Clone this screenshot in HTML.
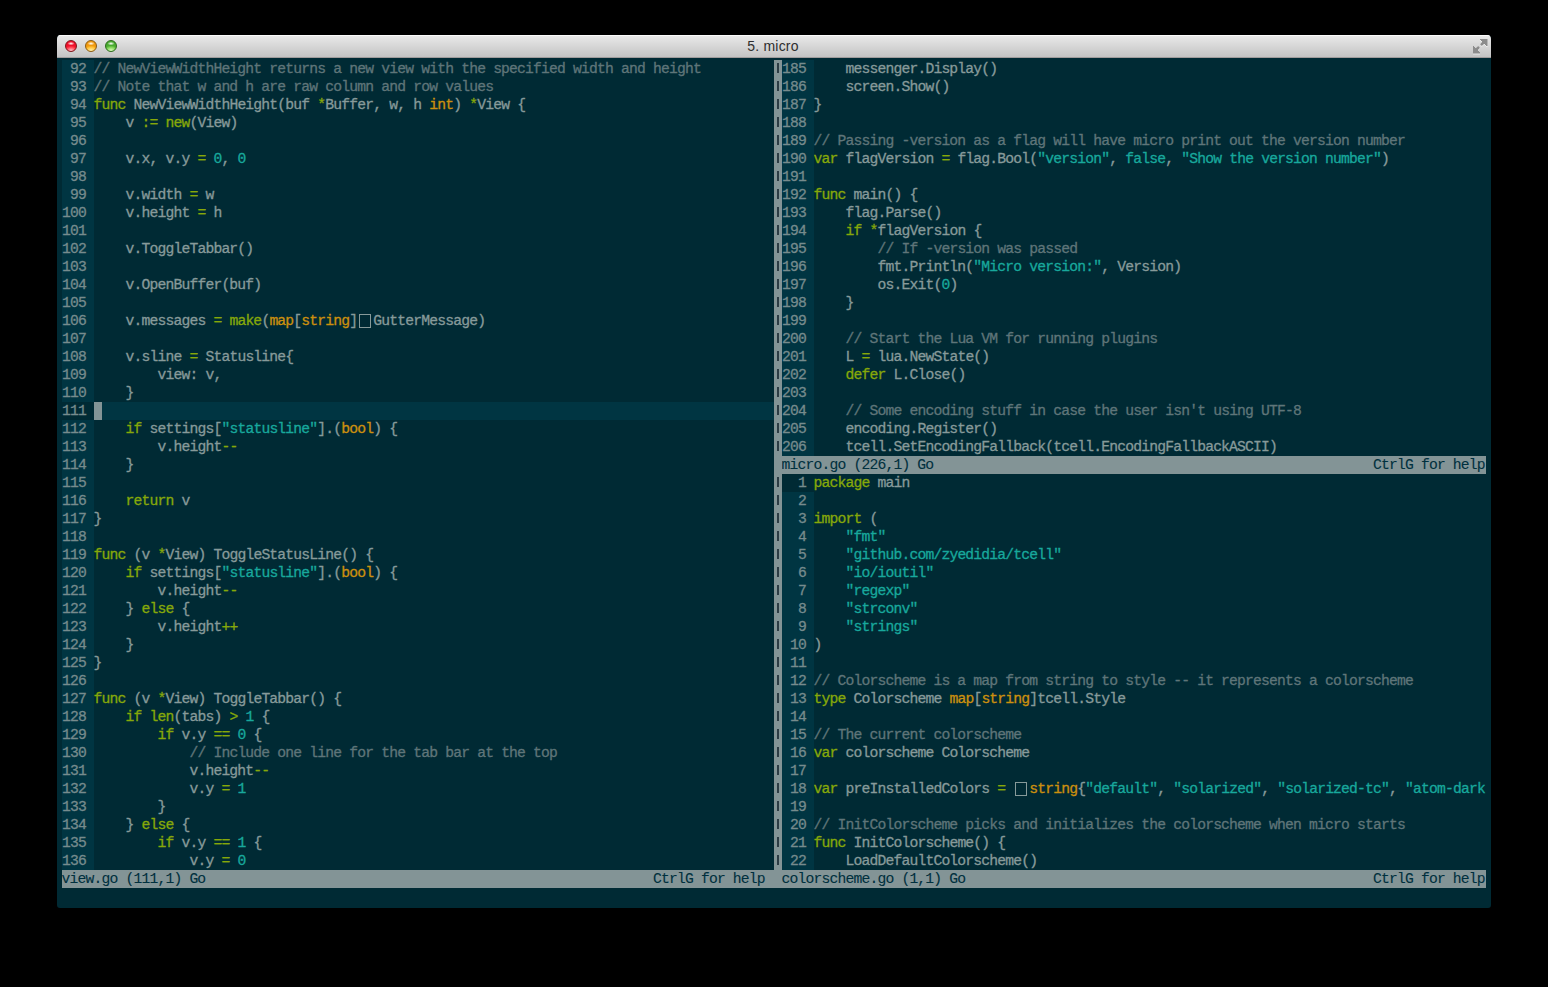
<!DOCTYPE html>
<html><head><meta charset="utf-8">
<style>
html,body{margin:0;padding:0;}
body{width:1548px;height:987px;background:#000;position:relative;overflow:hidden;}
.win{position:absolute;left:57px;top:35px;width:1434px;height:873px;border-radius:4px 4px 3px 3px;overflow:hidden;background:#002a34;}
.title{position:absolute;left:0;top:0;width:1434px;height:23px;background:linear-gradient(#eaeaea,#d8d8d8 45%,#c2c2c2);}
.title:before{content:"";position:absolute;left:0;top:0;right:0;height:1px;background:#fbfbfb;}
.title:after{content:"";position:absolute;left:0;bottom:0;right:0;height:1px;background:#a09c9c;}
.tt{position:absolute;left:-1px;width:1434px;top:3px;text-align:center;font:14px "Liberation Sans",sans-serif;letter-spacing:0.2px;color:#2e2e2e;}
.light{position:absolute;top:5px;width:12px;height:12px;border-radius:50%;box-sizing:border-box;}
.light:after{content:"";position:absolute;left:2px;top:1px;width:6px;height:3px;border-radius:50%;background:radial-gradient(ellipse at 50% 50%,rgba(255,255,255,0.95),rgba(255,255,255,0.35) 60%,rgba(255,255,255,0) 100%);}
.red{left:8px;background:radial-gradient(ellipse 70% 50% at 50% 95%,#ffc4cc,#ff3848 70%,#f0102a 100%);border:1px solid #7e1418;}
.yel{left:28px;background:radial-gradient(ellipse 70% 50% at 50% 95%,#fff4b0,#ffbe30 70%,#f09a10 100%);border:1px solid #8a5a10;}
.grn{left:48px;background:radial-gradient(ellipse 70% 50% at 50% 95%,#e0ffc0,#78d050 70%,#4aaa30 100%);border:1px solid #2a6a1a;}
.fs{position:absolute;left:1416px;top:4px;}
.r{position:absolute;height:18px;line-height:18px;white-space:pre;overflow:hidden;text-indent:-0.5px;font-family:"Liberation Mono",monospace;font-size:14.7px;letter-spacing:-0.8214px;color:#879a9a;-webkit-text-stroke:0.3px currentColor;}
.r i{font-style:normal;}
.bx{display:inline-block;position:relative;width:16px;height:18px;vertical-align:top;}
.bx:after{content:'';position:absolute;left:2px;top:2px;width:11.8px;height:14px;box-sizing:border-box;border:1.4px solid #879a9a;}
.c{color:#5f7579;} .s{color:#18a89c;} .k{color:#86a80a;} .y{color:#cc900e;}
.g{background:#003542;color:#768b8d;text-indent:0;}
.g.cur{background:#002a34;color:#768b8d;}
.hl{background:#003542;}
.st{background:#839496;color:#00303e;-webkit-text-stroke:0.1px currentColor;}
.cursor{position:absolute;width:8px;height:18px;background:#839496;}
.sep{position:absolute;width:8px;background:#839496;}
.bar{position:absolute;width:1.5px;height:10px;background:#2c3c44;}
</style></head><body>
<div class="win">
<div class="title">
<div class="light red"></div>
<div class="light yel"></div>
<div class="light grn"></div>
<svg class="fs" width="16" height="16" viewBox="0 0 16 16"><g fill="#f4f4f4" stroke="#f4f4f4" opacity="0.7" transform="translate(0,1)"><path d="M7 0H14V7Z"/><path d="M0 7V14H7Z"/><path d="M11 3L8.7 5.3M3 11L5.3 8.7" stroke-width="2.6" stroke-linecap="round"/></g><g fill="#8c8c8c" stroke="#8c8c8c"><path d="M7 0H14V7Z"/><path d="M0 7V14H7Z"/><path d="M11 3L8.7 5.3M3 11L5.3 8.7" stroke-width="2.6" stroke-linecap="round"/></g></svg>
<div class="tt">5. micro</div>
</div>
</div>
<div class="r g" style="left:62px;top:60px;width:32px"> 92 </div>
<div class="r " style="left:94px;top:60px;width:680px"><i class="c">// NewViewWidthHeight returns a new view with the specified width and height</i></div>
<div class="r g" style="left:62px;top:78px;width:32px"> 93 </div>
<div class="r " style="left:94px;top:78px;width:680px"><i class="c">// Note that w and h are raw column and row values</i></div>
<div class="r g" style="left:62px;top:96px;width:32px"> 94 </div>
<div class="r " style="left:94px;top:96px;width:680px"><i class="k">func</i> NewViewWidthHeight(buf <i class="k">*</i>Buffer, w, h <i class="y">int</i>) <i class="k">*</i>View {</div>
<div class="r g" style="left:62px;top:114px;width:32px"> 95 </div>
<div class="r " style="left:94px;top:114px;width:680px">    v <i class="k">:=</i> <i class="k">new</i>(View)</div>
<div class="r g" style="left:62px;top:132px;width:32px"> 96 </div>
<div class="r " style="left:94px;top:132px;width:680px"></div>
<div class="r g" style="left:62px;top:150px;width:32px"> 97 </div>
<div class="r " style="left:94px;top:150px;width:680px">    v.x, v.y <i class="k">=</i> <i class="s">0</i>, <i class="s">0</i></div>
<div class="r g" style="left:62px;top:168px;width:32px"> 98 </div>
<div class="r " style="left:94px;top:168px;width:680px"></div>
<div class="r g" style="left:62px;top:186px;width:32px"> 99 </div>
<div class="r " style="left:94px;top:186px;width:680px">    v.width <i class="k">=</i> w</div>
<div class="r g" style="left:62px;top:204px;width:32px">100 </div>
<div class="r " style="left:94px;top:204px;width:680px">    v.height <i class="k">=</i> h</div>
<div class="r g" style="left:62px;top:222px;width:32px">101 </div>
<div class="r " style="left:94px;top:222px;width:680px"></div>
<div class="r g" style="left:62px;top:240px;width:32px">102 </div>
<div class="r " style="left:94px;top:240px;width:680px">    v.ToggleTabbar()</div>
<div class="r g" style="left:62px;top:258px;width:32px">103 </div>
<div class="r " style="left:94px;top:258px;width:680px"></div>
<div class="r g" style="left:62px;top:276px;width:32px">104 </div>
<div class="r " style="left:94px;top:276px;width:680px">    v.OpenBuffer(buf)</div>
<div class="r g" style="left:62px;top:294px;width:32px">105 </div>
<div class="r " style="left:94px;top:294px;width:680px"></div>
<div class="r g" style="left:62px;top:312px;width:32px">106 </div>
<div class="r " style="left:94px;top:312px;width:680px">    v.messages <i class="k">=</i> <i class="k">make</i>(<i class="y">map</i>[<i class="y">string</i>]<b class="bx"></b>GutterMessage)</div>
<div class="r g" style="left:62px;top:330px;width:32px">107 </div>
<div class="r " style="left:94px;top:330px;width:680px"></div>
<div class="r g" style="left:62px;top:348px;width:32px">108 </div>
<div class="r " style="left:94px;top:348px;width:680px">    v.sline <i class="k">=</i> Statusline{</div>
<div class="r g" style="left:62px;top:366px;width:32px">109 </div>
<div class="r " style="left:94px;top:366px;width:680px">        view: v,</div>
<div class="r g" style="left:62px;top:384px;width:32px">110 </div>
<div class="r " style="left:94px;top:384px;width:680px">    }</div>
<div class="r g cur" style="left:62px;top:402px;width:32px">111 </div>
<div class="r hl" style="left:94px;top:402px;width:680px"></div>
<div class="r g" style="left:62px;top:420px;width:32px">112 </div>
<div class="r " style="left:94px;top:420px;width:680px">    <i class="k">if</i> settings[<i class="s">&quot;statusline&quot;</i>].(<i class="y">bool</i>) {</div>
<div class="r g" style="left:62px;top:438px;width:32px">113 </div>
<div class="r " style="left:94px;top:438px;width:680px">        v.height<i class="k">--</i></div>
<div class="r g" style="left:62px;top:456px;width:32px">114 </div>
<div class="r " style="left:94px;top:456px;width:680px">    }</div>
<div class="r g" style="left:62px;top:474px;width:32px">115 </div>
<div class="r " style="left:94px;top:474px;width:680px"></div>
<div class="r g" style="left:62px;top:492px;width:32px">116 </div>
<div class="r " style="left:94px;top:492px;width:680px">    <i class="k">return</i> v</div>
<div class="r g" style="left:62px;top:510px;width:32px">117 </div>
<div class="r " style="left:94px;top:510px;width:680px">}</div>
<div class="r g" style="left:62px;top:528px;width:32px">118 </div>
<div class="r " style="left:94px;top:528px;width:680px"></div>
<div class="r g" style="left:62px;top:546px;width:32px">119 </div>
<div class="r " style="left:94px;top:546px;width:680px"><i class="k">func</i> (v <i class="k">*</i>View) ToggleStatusLine() {</div>
<div class="r g" style="left:62px;top:564px;width:32px">120 </div>
<div class="r " style="left:94px;top:564px;width:680px">    <i class="k">if</i> settings[<i class="s">&quot;statusline&quot;</i>].(<i class="y">bool</i>) {</div>
<div class="r g" style="left:62px;top:582px;width:32px">121 </div>
<div class="r " style="left:94px;top:582px;width:680px">        v.height<i class="k">--</i></div>
<div class="r g" style="left:62px;top:600px;width:32px">122 </div>
<div class="r " style="left:94px;top:600px;width:680px">    } <i class="k">else</i> {</div>
<div class="r g" style="left:62px;top:618px;width:32px">123 </div>
<div class="r " style="left:94px;top:618px;width:680px">        v.height<i class="k">++</i></div>
<div class="r g" style="left:62px;top:636px;width:32px">124 </div>
<div class="r " style="left:94px;top:636px;width:680px">    }</div>
<div class="r g" style="left:62px;top:654px;width:32px">125 </div>
<div class="r " style="left:94px;top:654px;width:680px">}</div>
<div class="r g" style="left:62px;top:672px;width:32px">126 </div>
<div class="r " style="left:94px;top:672px;width:680px"></div>
<div class="r g" style="left:62px;top:690px;width:32px">127 </div>
<div class="r " style="left:94px;top:690px;width:680px"><i class="k">func</i> (v <i class="k">*</i>View) ToggleTabbar() {</div>
<div class="r g" style="left:62px;top:708px;width:32px">128 </div>
<div class="r " style="left:94px;top:708px;width:680px">    <i class="k">if</i> <i class="k">len</i>(tabs) <i class="k">&gt;</i> <i class="s">1</i> {</div>
<div class="r g" style="left:62px;top:726px;width:32px">129 </div>
<div class="r " style="left:94px;top:726px;width:680px">        <i class="k">if</i> v.y <i class="k">==</i> <i class="s">0</i> {</div>
<div class="r g" style="left:62px;top:744px;width:32px">130 </div>
<div class="r " style="left:94px;top:744px;width:680px">            <i class="c">// Include one line for the tab bar at the top</i></div>
<div class="r g" style="left:62px;top:762px;width:32px">131 </div>
<div class="r " style="left:94px;top:762px;width:680px">            v.height<i class="k">--</i></div>
<div class="r g" style="left:62px;top:780px;width:32px">132 </div>
<div class="r " style="left:94px;top:780px;width:680px">            v.y <i class="k">=</i> <i class="s">1</i></div>
<div class="r g" style="left:62px;top:798px;width:32px">133 </div>
<div class="r " style="left:94px;top:798px;width:680px">        }</div>
<div class="r g" style="left:62px;top:816px;width:32px">134 </div>
<div class="r " style="left:94px;top:816px;width:680px">    } <i class="k">else</i> {</div>
<div class="r g" style="left:62px;top:834px;width:32px">135 </div>
<div class="r " style="left:94px;top:834px;width:680px">        <i class="k">if</i> v.y <i class="k">==</i> <i class="s">1</i> {</div>
<div class="r g" style="left:62px;top:852px;width:32px">136 </div>
<div class="r " style="left:94px;top:852px;width:680px">            v.y <i class="k">=</i> <i class="s">0</i></div>
<div class="cursor" style="left:94px;top:402px"></div>
<div class="sep" style="left:774px;top:60px;height:828px"></div>
<div class="bar" style="left:777px;top:63px"></div>
<div class="bar" style="left:777px;top:81px"></div>
<div class="bar" style="left:777px;top:99px"></div>
<div class="bar" style="left:777px;top:117px"></div>
<div class="bar" style="left:777px;top:135px"></div>
<div class="bar" style="left:777px;top:153px"></div>
<div class="bar" style="left:777px;top:171px"></div>
<div class="bar" style="left:777px;top:189px"></div>
<div class="bar" style="left:777px;top:207px"></div>
<div class="bar" style="left:777px;top:225px"></div>
<div class="bar" style="left:777px;top:243px"></div>
<div class="bar" style="left:777px;top:261px"></div>
<div class="bar" style="left:777px;top:279px"></div>
<div class="bar" style="left:777px;top:297px"></div>
<div class="bar" style="left:777px;top:315px"></div>
<div class="bar" style="left:777px;top:333px"></div>
<div class="bar" style="left:777px;top:351px"></div>
<div class="bar" style="left:777px;top:369px"></div>
<div class="bar" style="left:777px;top:387px"></div>
<div class="bar" style="left:777px;top:405px"></div>
<div class="bar" style="left:777px;top:423px"></div>
<div class="bar" style="left:777px;top:441px"></div>
<div class="bar" style="left:777px;top:477px"></div>
<div class="bar" style="left:777px;top:495px"></div>
<div class="bar" style="left:777px;top:513px"></div>
<div class="bar" style="left:777px;top:531px"></div>
<div class="bar" style="left:777px;top:549px"></div>
<div class="bar" style="left:777px;top:567px"></div>
<div class="bar" style="left:777px;top:585px"></div>
<div class="bar" style="left:777px;top:603px"></div>
<div class="bar" style="left:777px;top:621px"></div>
<div class="bar" style="left:777px;top:639px"></div>
<div class="bar" style="left:777px;top:657px"></div>
<div class="bar" style="left:777px;top:675px"></div>
<div class="bar" style="left:777px;top:693px"></div>
<div class="bar" style="left:777px;top:711px"></div>
<div class="bar" style="left:777px;top:729px"></div>
<div class="bar" style="left:777px;top:747px"></div>
<div class="bar" style="left:777px;top:765px"></div>
<div class="bar" style="left:777px;top:783px"></div>
<div class="bar" style="left:777px;top:801px"></div>
<div class="bar" style="left:777px;top:819px"></div>
<div class="bar" style="left:777px;top:837px"></div>
<div class="bar" style="left:777px;top:855px"></div>
<div class="r g" style="left:782px;top:60px;width:32px">185 </div>
<div class="r " style="left:814px;top:60px;width:672px">    messenger.Display()</div>
<div class="r g" style="left:782px;top:78px;width:32px">186 </div>
<div class="r " style="left:814px;top:78px;width:672px">    screen.Show()</div>
<div class="r g" style="left:782px;top:96px;width:32px">187 </div>
<div class="r " style="left:814px;top:96px;width:672px">}</div>
<div class="r g" style="left:782px;top:114px;width:32px">188 </div>
<div class="r " style="left:814px;top:114px;width:672px"></div>
<div class="r g" style="left:782px;top:132px;width:32px">189 </div>
<div class="r " style="left:814px;top:132px;width:672px"><i class="c">// Passing -version as a flag will have micro print out the version number</i></div>
<div class="r g" style="left:782px;top:150px;width:32px">190 </div>
<div class="r " style="left:814px;top:150px;width:672px"><i class="k">var</i> flagVersion <i class="k">=</i> flag.Bool(<i class="s">&quot;version&quot;</i>, <i class="s">false</i>, <i class="s">&quot;Show the version number&quot;</i>)</div>
<div class="r g" style="left:782px;top:168px;width:32px">191 </div>
<div class="r " style="left:814px;top:168px;width:672px"></div>
<div class="r g" style="left:782px;top:186px;width:32px">192 </div>
<div class="r " style="left:814px;top:186px;width:672px"><i class="k">func</i> main() {</div>
<div class="r g" style="left:782px;top:204px;width:32px">193 </div>
<div class="r " style="left:814px;top:204px;width:672px">    flag.Parse()</div>
<div class="r g" style="left:782px;top:222px;width:32px">194 </div>
<div class="r " style="left:814px;top:222px;width:672px">    <i class="k">if</i> <i class="k">*</i>flagVersion {</div>
<div class="r g" style="left:782px;top:240px;width:32px">195 </div>
<div class="r " style="left:814px;top:240px;width:672px">        <i class="c">// If -version was passed</i></div>
<div class="r g" style="left:782px;top:258px;width:32px">196 </div>
<div class="r " style="left:814px;top:258px;width:672px">        fmt.Println(<i class="s">&quot;Micro version:&quot;</i>, Version)</div>
<div class="r g" style="left:782px;top:276px;width:32px">197 </div>
<div class="r " style="left:814px;top:276px;width:672px">        os.Exit(<i class="s">0</i>)</div>
<div class="r g" style="left:782px;top:294px;width:32px">198 </div>
<div class="r " style="left:814px;top:294px;width:672px">    }</div>
<div class="r g" style="left:782px;top:312px;width:32px">199 </div>
<div class="r " style="left:814px;top:312px;width:672px"></div>
<div class="r g" style="left:782px;top:330px;width:32px">200 </div>
<div class="r " style="left:814px;top:330px;width:672px">    <i class="c">// Start the Lua VM for running plugins</i></div>
<div class="r g" style="left:782px;top:348px;width:32px">201 </div>
<div class="r " style="left:814px;top:348px;width:672px">    L <i class="k">=</i> lua.NewState()</div>
<div class="r g" style="left:782px;top:366px;width:32px">202 </div>
<div class="r " style="left:814px;top:366px;width:672px">    <i class="k">defer</i> L.Close()</div>
<div class="r g" style="left:782px;top:384px;width:32px">203 </div>
<div class="r " style="left:814px;top:384px;width:672px"></div>
<div class="r g" style="left:782px;top:402px;width:32px">204 </div>
<div class="r " style="left:814px;top:402px;width:672px">    <i class="c">// Some encoding stuff in case the user isn&#x27;t using UTF-8</i></div>
<div class="r g" style="left:782px;top:420px;width:32px">205 </div>
<div class="r " style="left:814px;top:420px;width:672px">    encoding.Register()</div>
<div class="r g" style="left:782px;top:438px;width:32px">206 </div>
<div class="r " style="left:814px;top:438px;width:672px">    tcell.SetEncodingFallback(tcell.EncodingFallbackASCII)</div>
<div class="r g cur" style="left:782px;top:474px;width:32px">  1 </div>
<div class="r " style="left:814px;top:474px;width:672px"><i class="k">package</i> main</div>
<div class="r g" style="left:782px;top:492px;width:32px">  2 </div>
<div class="r " style="left:814px;top:492px;width:672px"></div>
<div class="r g" style="left:782px;top:510px;width:32px">  3 </div>
<div class="r " style="left:814px;top:510px;width:672px"><i class="k">import</i> (</div>
<div class="r g" style="left:782px;top:528px;width:32px">  4 </div>
<div class="r " style="left:814px;top:528px;width:672px">    <i class="s">&quot;fmt&quot;</i></div>
<div class="r g" style="left:782px;top:546px;width:32px">  5 </div>
<div class="r " style="left:814px;top:546px;width:672px">    <i class="s">&quot;github.com/zyedidia/tcell&quot;</i></div>
<div class="r g" style="left:782px;top:564px;width:32px">  6 </div>
<div class="r " style="left:814px;top:564px;width:672px">    <i class="s">&quot;io/ioutil&quot;</i></div>
<div class="r g" style="left:782px;top:582px;width:32px">  7 </div>
<div class="r " style="left:814px;top:582px;width:672px">    <i class="s">&quot;regexp&quot;</i></div>
<div class="r g" style="left:782px;top:600px;width:32px">  8 </div>
<div class="r " style="left:814px;top:600px;width:672px">    <i class="s">&quot;strconv&quot;</i></div>
<div class="r g" style="left:782px;top:618px;width:32px">  9 </div>
<div class="r " style="left:814px;top:618px;width:672px">    <i class="s">&quot;strings&quot;</i></div>
<div class="r g" style="left:782px;top:636px;width:32px"> 10 </div>
<div class="r " style="left:814px;top:636px;width:672px">)</div>
<div class="r g" style="left:782px;top:654px;width:32px"> 11 </div>
<div class="r " style="left:814px;top:654px;width:672px"></div>
<div class="r g" style="left:782px;top:672px;width:32px"> 12 </div>
<div class="r " style="left:814px;top:672px;width:672px"><i class="c">// Colorscheme is a map from string to style -- it represents a colorscheme</i></div>
<div class="r g" style="left:782px;top:690px;width:32px"> 13 </div>
<div class="r " style="left:814px;top:690px;width:672px"><i class="k">type</i> Colorscheme <i class="y">map</i>[<i class="y">string</i>]tcell.Style</div>
<div class="r g" style="left:782px;top:708px;width:32px"> 14 </div>
<div class="r " style="left:814px;top:708px;width:672px"></div>
<div class="r g" style="left:782px;top:726px;width:32px"> 15 </div>
<div class="r " style="left:814px;top:726px;width:672px"><i class="c">// The current colorscheme</i></div>
<div class="r g" style="left:782px;top:744px;width:32px"> 16 </div>
<div class="r " style="left:814px;top:744px;width:672px"><i class="k">var</i> colorscheme Colorscheme</div>
<div class="r g" style="left:782px;top:762px;width:32px"> 17 </div>
<div class="r " style="left:814px;top:762px;width:672px"></div>
<div class="r g" style="left:782px;top:780px;width:32px"> 18 </div>
<div class="r " style="left:814px;top:780px;width:672px"><i class="k">var</i> preInstalledColors <i class="k">=</i> <b class="bx"></b><i class="y">string</i>{<i class="s">&quot;default&quot;</i>, <i class="s">&quot;solarized&quot;</i>, <i class="s">&quot;solarized-tc&quot;</i>, <i class="s">&quot;atom-dark</i></div>
<div class="r g" style="left:782px;top:798px;width:32px"> 19 </div>
<div class="r " style="left:814px;top:798px;width:672px"></div>
<div class="r g" style="left:782px;top:816px;width:32px"> 20 </div>
<div class="r " style="left:814px;top:816px;width:672px"><i class="c">// InitColorscheme picks and initializes the colorscheme when micro starts</i></div>
<div class="r g" style="left:782px;top:834px;width:32px"> 21 </div>
<div class="r " style="left:814px;top:834px;width:672px"><i class="k">func</i> InitColorscheme() {</div>
<div class="r g" style="left:782px;top:852px;width:32px"> 22 </div>
<div class="r " style="left:814px;top:852px;width:672px">    LoadDefaultColorscheme()</div>
<div class="r st" style="left:62px;top:870px;width:712px">view.go (111,1) Go                                                        CtrlG for help </div>
<div class="r st" style="left:774px;top:870px;width:8px"> </div>
<div class="r st" style="left:782px;top:870px;width:704px">colorscheme.go (1,1) Go                                                   CtrlG for help</div>
<div class="r st" style="left:782px;top:456px;width:704px">micro.go (226,1) Go                                                       CtrlG for help</div>
</body></html>
